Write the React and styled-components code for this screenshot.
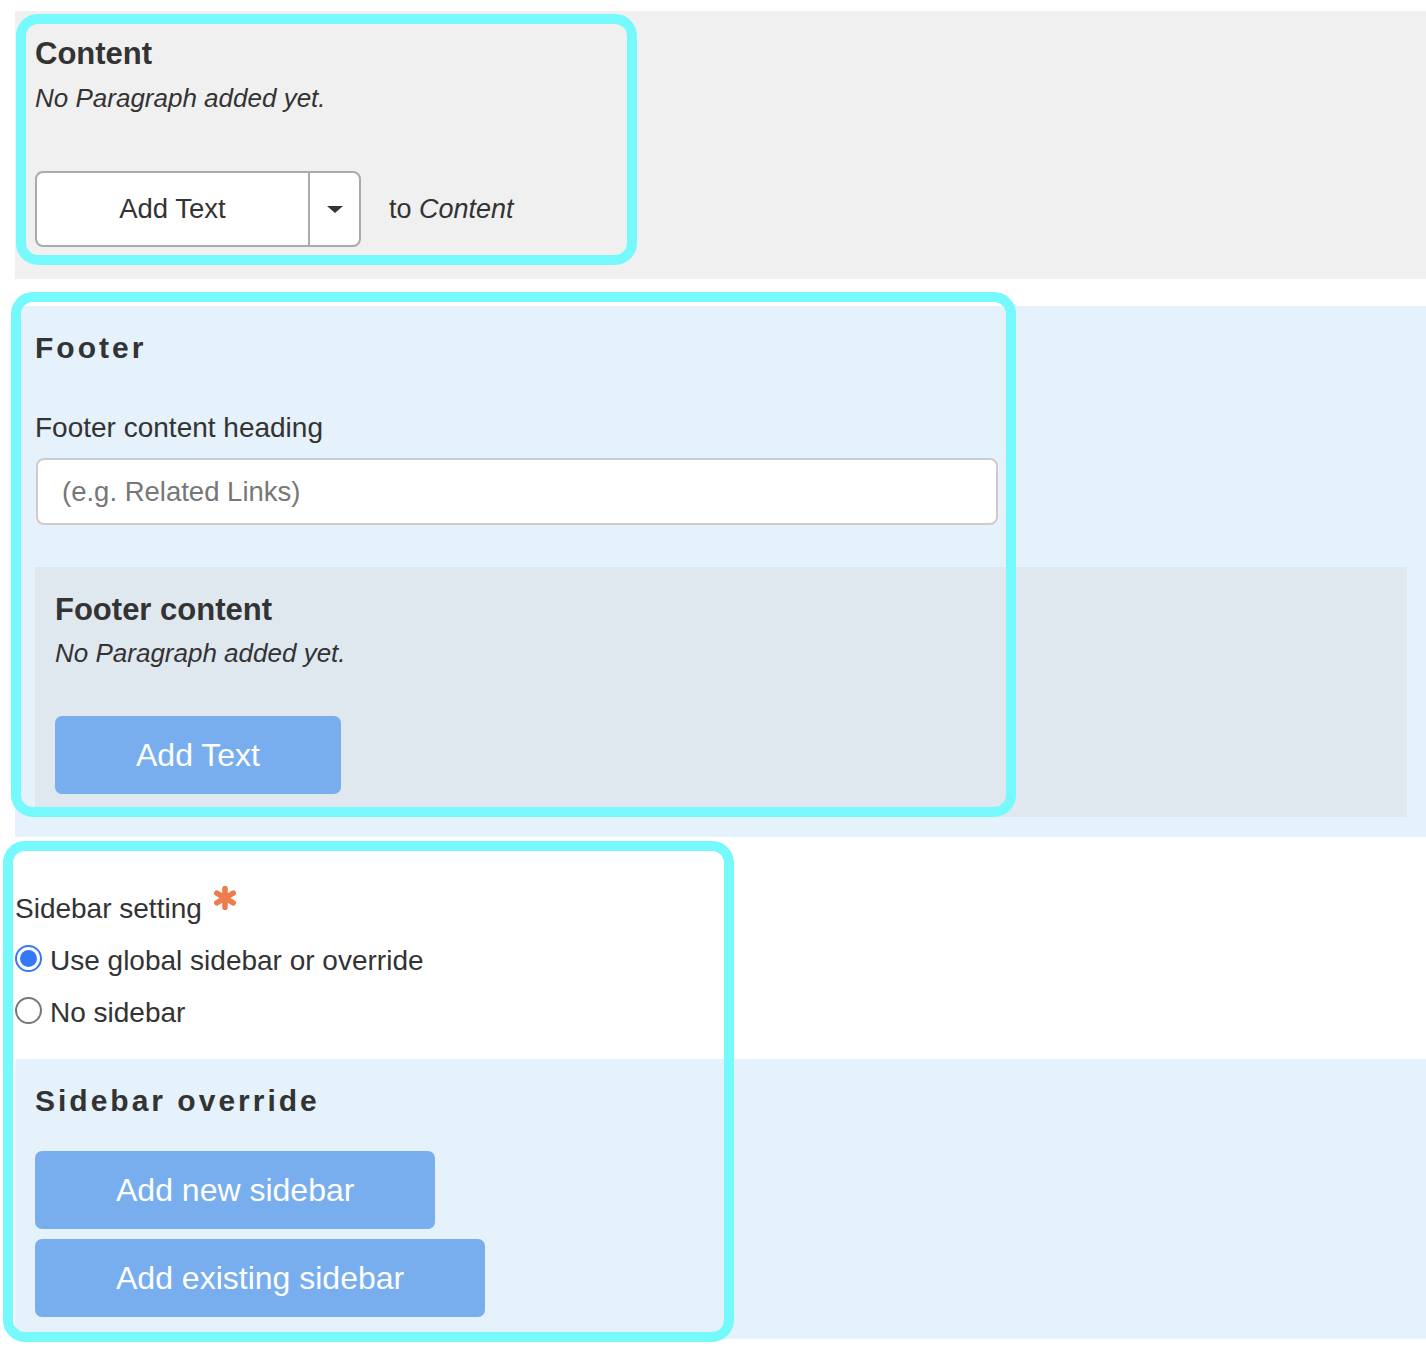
import styled, { createGlobalStyle } from "styled-components";

const GlobalStyle = createGlobalStyle`
  html, body {
    margin: 0;
    padding: 0;
    background: #ffffff;
  }
  body {
    font-family: "Liberation Sans", Arial, sans-serif;
    color: #333333;
  }
  * {
    box-sizing: border-box;
  }
`;

const Page = styled.div`
  position: relative;
  width: 1426px;
  padding: 11px 0 24px 15px;
`;

const GreyBlock = styled.section`
  background: #f0f0f0;
  padding: 25px 20px 32px 20px;
  margin-bottom: 27px;
`;

const BlueBlock = styled.section`
  background: #e5f1fb;
  padding: ${(props) => props.$pad || "25px 19px 20px 20px"};
`;

const InnerPanel = styled.div`
  background: #dfe7ef;
  padding: 25px 20px 23px 20px;
  margin-top: 42px;
`;

const BlockTitle = styled.h3`
  margin: 0;
  font-size: 31px;
  line-height: 36px;
  font-weight: 700;
  color: #333;
`;

const SpacedTitle = styled.h2`
  margin: 0;
  font-size: 30px;
  line-height: 34px;
  font-weight: 700;
  letter-spacing: 3px;
  color: #333;
`;

const EmptyNote = styled.p`
  margin: ${(props) => props.$mt || "11px"} 0 0 0;
  font-size: 26px;
  line-height: 30px;
  font-style: italic;
  color: #333;
`;

const AddRow = styled.div`
  display: flex;
  align-items: center;
  gap: 28px;
  margin-top: 58px;
`;

const SplitButton = styled.div`
  display: flex;
  height: 76px;
  background: #ffffff;
  border: 2px solid #aaaaaa;
  border-radius: 8px;
  overflow: hidden;
`;

const SplitMain = styled.button`
  border: none;
  background: transparent;
  font-family: inherit;
  font-size: 27.5px;
  color: #333;
  padding: 0;
  width: 271px;
  cursor: pointer;
`;

const SplitToggle = styled.button`
  width: 51px;
  border: none;
  border-left: 2px solid #aaaaaa;
  background: transparent;
  display: flex;
  align-items: center;
  justify-content: center;
  cursor: pointer;
`;

const Caret = styled.span`
  display: block;
  width: 0;
  height: 0;
  border-left: 8px solid transparent;
  border-right: 8px solid transparent;
  border-top: 7px solid #333;
`;

const TargetText = styled.span`
  font-size: 27px;
  color: #333;

  em {
    font-style: italic;
  }
`;

const FieldLabel = styled.label`
  display: flex;
  align-items: flex-start;
  font-size: 28px;
  line-height: 32px;
  color: #333;
  margin-top: ${(props) => props.$mt || "0"};
`;

const TextInput = styled.input`
  display: block;
  width: 962px;
  height: 67px;
  margin: 14px 0 0 1px;
  padding: 0 24px;
  border: 2px solid #cccccc;
  border-radius: 8px;
  background: #ffffff;
  font-family: inherit;
  font-size: 27.5px;
  color: #333;
  outline: none;

  &::placeholder {
    color: #777777;
  }
`;

const BlueButton = styled.button`
  display: block;
  height: 78px;
  padding: 0 81px;
  border: none;
  border-radius: 7px;
  background: #78aeee;
  color: #ffffff;
  font-family: inherit;
  font-size: 32px;
  cursor: pointer;
  margin-top: ${(props) => props.$mt || "0"};
`;

const SettingBlock = styled.section`
  display: flex;
  flex-direction: column;
  gap: 20px;
  padding-top: 56px;
`;

const RadioRow = styled.label`
  display: flex;
  align-items: flex-start;
  gap: 8px;
  font-size: 28px;
  line-height: 32px;
  color: #333;
`;

const RadioDot = styled.span`
  flex: none;
  width: 27px;
  height: 27px;
  border-radius: 50%;
  border: ${(props) => (props.$checked ? "2px solid #3478f6" : "2px solid #767676")};
  background: #ffffff;
  display: flex;
  align-items: center;
  justify-content: center;

  &::after {
    content: "";
    display: ${(props) => (props.$checked ? "block" : "none")};
    width: 17px;
    height: 17px;
    border-radius: 50%;
    background: #3478f6;
  }
`;

const Required = styled.svg`
  flex: none;
  margin: -7px 0 0 11px;
`;

const OverrideBlock = styled(BlueBlock)`
  margin-top: 30px;
`;

const Highlight = styled.div`
  position: absolute;
  left: ${(props) => props.$x}px;
  top: ${(props) => props.$y}px;
  width: ${(props) => props.$w}px;
  height: ${(props) => props.$h}px;
  border: 10px solid #75f9fc;
  border-radius: 22px;
  pointer-events: none;
`;

const Asterisk = () => (
  <Required width="24" height="24" viewBox="0 0 24 24">
    <g stroke="#ef7a4e" strokeWidth="5.5" strokeLinecap="round">
      <line x1="12" y1="2.5" x2="12" y2="21.5" />
      <line x1="3.8" y1="7.2" x2="20.2" y2="16.8" />
      <line x1="3.8" y1="16.8" x2="20.2" y2="7.2" />
    </g>
  </Required>
);

export default function App() {
  return (
    <>
      <GlobalStyle />
      <Page>
        <GreyBlock>
          <BlockTitle>Content</BlockTitle>
          <EmptyNote>No Paragraph added yet.</EmptyNote>
          <AddRow>
            <SplitButton>
              <SplitMain>Add Text</SplitMain>
              <SplitToggle aria-label="More block types">
                <Caret />
              </SplitToggle>
            </SplitButton>
            <TargetText>
              to <em>Content</em>
            </TargetText>
          </AddRow>
        </GreyBlock>

        <BlueBlock>
          <SpacedTitle>Footer</SpacedTitle>
          <FieldLabel $mt="47px">Footer content heading</FieldLabel>
          <TextInput placeholder="(e.g. Related Links)" />
          <InnerPanel>
            <BlockTitle>Footer content</BlockTitle>
            <EmptyNote $mt="10px">No Paragraph added yet.</EmptyNote>
            <BlueButton $mt="48px">Add Text</BlueButton>
          </InnerPanel>
        </BlueBlock>

        <SettingBlock>
          <FieldLabel>
            Sidebar setting
            <Asterisk />
          </FieldLabel>
          <RadioRow>
            <RadioDot $checked />
            Use global sidebar or override
          </RadioRow>
          <RadioRow>
            <RadioDot />
            No sidebar
          </RadioRow>
        </SettingBlock>

        <OverrideBlock $pad="25px 19px 22px 20px">
          <SpacedTitle>Sidebar override</SpacedTitle>
          <BlueButton $mt="33px">Add new sidebar</BlueButton>
          <BlueButton $mt="10px">Add existing sidebar</BlueButton>
        </OverrideBlock>

        <Highlight $x={16} $y={14} $w={621} $h={251} />
        <Highlight $x={11} $y={292} $w={1005} $h={525} />
        <Highlight $x={3} $y={841} $w={731} $h={501} />
      </Page>
    </>
  );
}
